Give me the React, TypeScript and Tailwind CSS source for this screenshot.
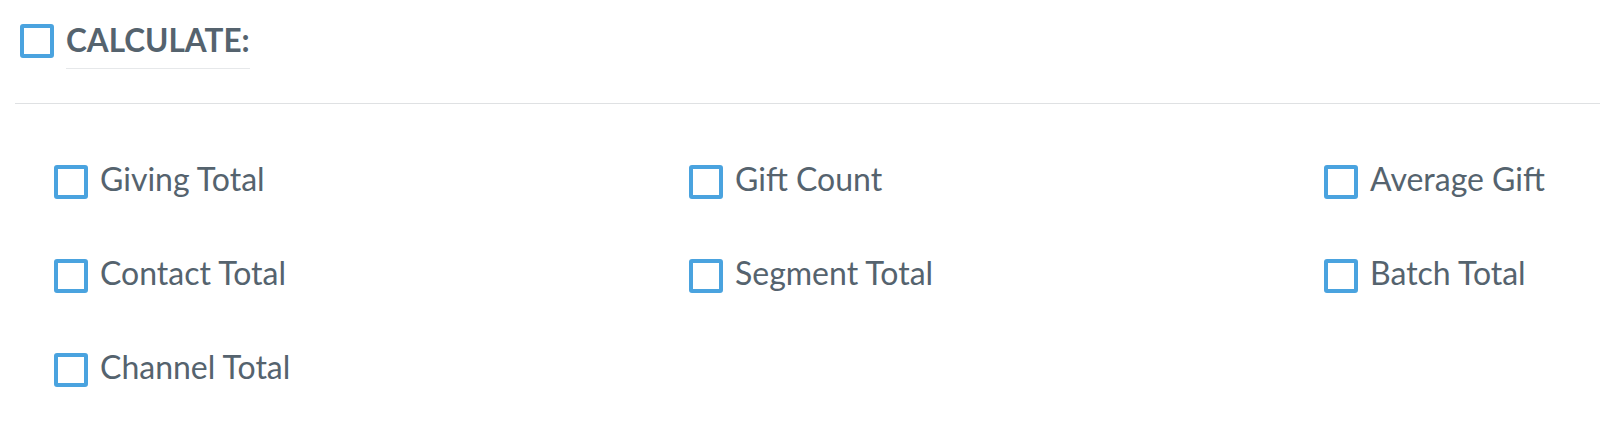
import React from "react";

function Box() {
  return (
    <span className="inline-block h-[34px] w-[34px] shrink-0 rounded-[3px] border-[4px] border-[#4aa3df] bg-white" />
  );
}

const items = [
  "Giving Total",
  "Gift Count",
  "Average Gift",
  "Contact Total",
  "Segment Total",
  "Batch Total",
  "Channel Total",
];

export default function App() {
  return (
    <div
      className="h-[426px] w-[1600px] overflow-hidden bg-white text-[#55636e]"
      style={{ fontFamily: "Lato, 'Open Sans', sans-serif" }}
    >
      <div className="flex items-start gap-[12px] pl-[20px] pt-[24px]">
        <Box />
        <div className="flex flex-col">
          <span className="-translate-y-[1px] text-[31.5px] font-bold leading-[34px]">
            CALCULATE:
          </span>
          <span className="mt-[10px] h-px bg-[#e6e8ea]" />
        </div>
      </div>
      <div className="ml-[15px] mt-[34px] h-px bg-[#dfe1e3]" />
      <div className="grid grid-cols-[635px_635px_1fr] gap-y-[60px] pl-[54px] pt-[61px]">
        {items.map((t) => (
          <div key={t} className="flex items-center gap-[12px]">
            <Box />
            <span className="-translate-y-[3px] text-[32px] leading-[34px]">{t}</span>
          </div>
        ))}
      </div>
    </div>
  );
}
